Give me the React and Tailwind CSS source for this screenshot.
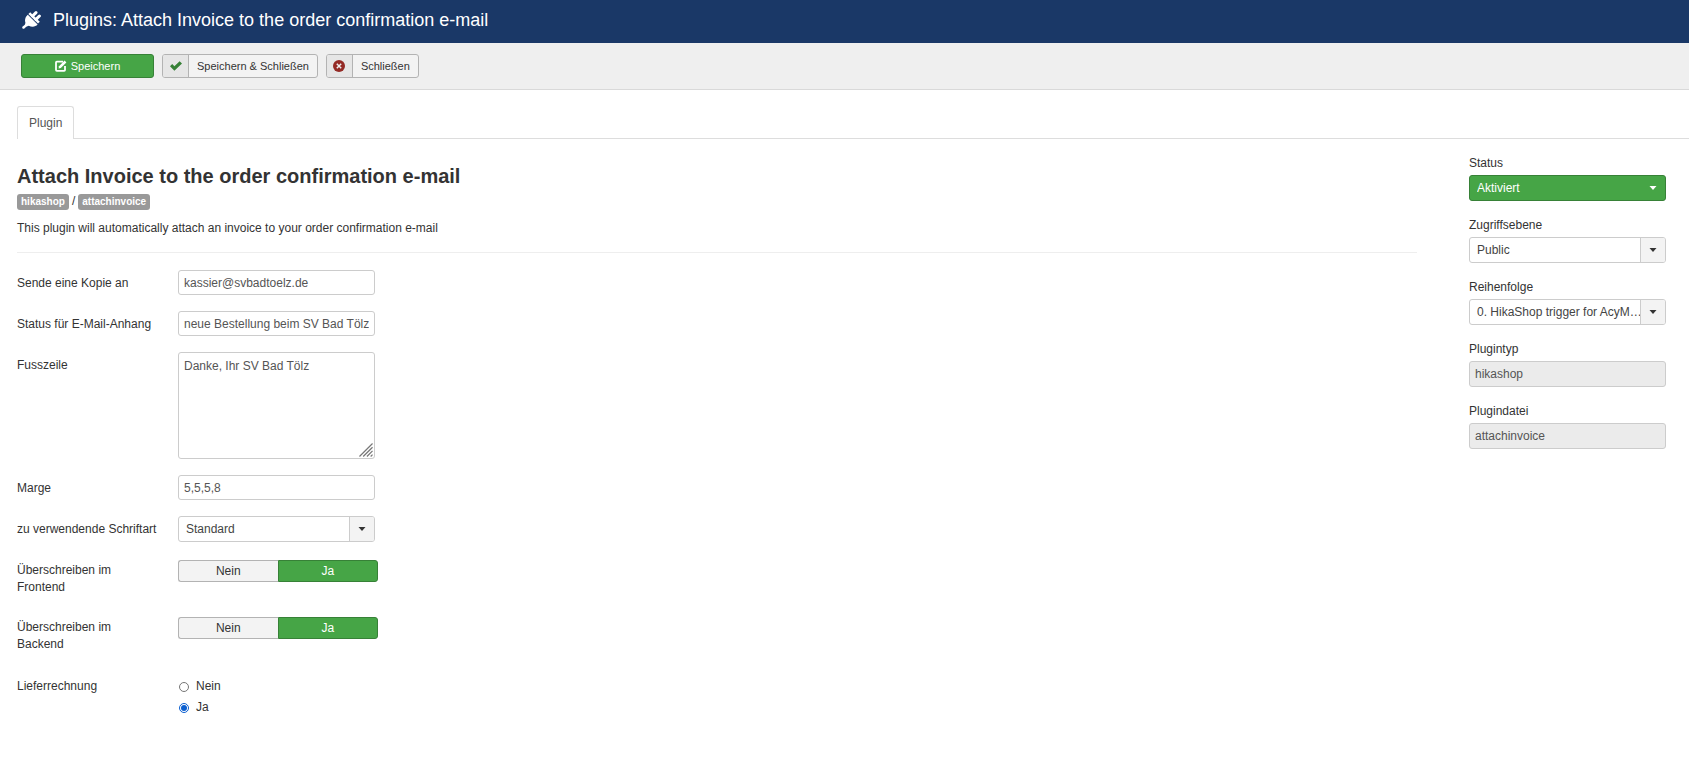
import React, { useState } from "react";

const PlugIcon = () => (
  <svg viewBox="0 0 19 18" className="w-[19px] h-[18px] fill-white" aria-hidden="true">
    <path d="M5.8 3.8 L15.6 13.6 C13.6 16 9.8 16.4 6.8 14.8 L5.4 15.2 Q4.2 15.6 3.4 16.6 L2.4 17.6 Q1.4 18.2 0.6 17.4 Q-0.2 16.6 0.6 15.6 L2 14.6 Q3 13.8 3.2 12.8 L3.4 11.6 C2.4 9 3.4 5.8 5.8 3.8 Z" />
    <path d="M6.4 3 L8.2 1.2 L17.8 10.8 L16 12.6 Z" />
    <path
      d="M10.6 5 L14 1.6 M14 8.4 L17.4 5"
      stroke="white"
      strokeWidth="3"
      strokeLinecap="round"
    />
  </svg>
);

const EditIcon = () => (
  <svg viewBox="0 0 12 12" className="size-3" aria-hidden="true">
    <path d="M8 1.7 H1.8 Q1 1.7 1 2.5 V10 Q1 10.8 1.8 10.8 H9.2 Q10 10.8 10 10 V6" fill="none" stroke="currentColor" strokeWidth="1.8" />
    <path d="M3.6 8.4 L4 6.2 L9.6 0.6 L11.4 2.4 L5.8 8 Z" fill="currentColor" />
  </svg>
);

const CheckIcon = () => (
  <svg viewBox="0 0 12 10" className="w-3 h-[10px] fill-[#378137]" aria-hidden="true">
    <path d="M0 5.2 L2.2 3 L4.4 5.2 L9.6 0.2 L12 2.4 L4.4 9.8 Z" />
  </svg>
);

const CancelIcon = () => (
  <svg viewBox="0 0 12 12" className="size-3" aria-hidden="true">
    <circle cx="6" cy="6" r="6" fill="#942a25" />
    <path d="M3.8 3.8 L8.2 8.2 M8.2 3.8 L3.8 8.2" stroke="#eee" strokeWidth="1.5" />
  </svg>
);

const inputClass =
  "block w-full h-[25px] px-[5px] border border-[#ccc] rounded-[3px] text-[#555] bg-white outline-none";

const ToolbarButton = ({ icon, children }) => (
  <button
    type="button"
    className="flex h-6 items-stretch rounded-[3px] border border-[#b3b3b3] bg-[#f3f3f3] text-[11px] text-[#333] overflow-hidden"
  >
    <span className="flex w-[26px] items-center justify-center border-r border-[#b3b3b3] bg-[#e6e6e6]">{icon}</span>
    <span className="flex items-center px-2">{children}</span>
  </button>
);

const Select = ({ id, options, green }) => (
  <div className="relative">
    <select
      id={id}
      className={
        green
          ? "block w-full h-[26px] appearance-none rounded-[3px] border border-[#378137] bg-[#46a546] pl-[7px] pr-[26px] text-white outline-none"
          : "block w-full h-[26px] appearance-none rounded-[3px] border border-[#ccc] bg-white pl-[7px] pr-[22px] text-[#444] text-ellipsis outline-none"
      }
    >
      {options.map((option) => (
        <option key={option}>{option}</option>
      ))}
    </select>
    <span
      className={
        green
          ? "pointer-events-none absolute inset-y-px right-px flex w-6 items-center justify-center text-white"
          : "pointer-events-none absolute inset-y-px right-px flex w-[25px] items-center justify-center rounded-r-[2px] border-l border-[#ccc] bg-[#f3f3f3] text-[#333]"
      }
    >
      <svg viewBox="0 0 8 4" className="w-2 h-1 fill-current" aria-hidden="true">
        <path d="M0.5 0 H7.5 L4 4 Z" />
      </svg>
    </span>
  </div>
);

const Row = ({ label, htmlFor, children }) => (
  <div className="flex items-start">
    <label htmlFor={htmlFor} className="w-[161px] shrink-0 pt-[5px] pr-4">
      {label}
    </label>
    {children}
  </div>
);

const YesNoSwitch = ({ label, name }) => {
  const [value, setValue] = useState("Ja");

  return (
    <div role="group" aria-labelledby={name} className="flex items-start">
      <div id={name} className="w-[161px] shrink-0 pt-[2px] pr-10">
        {label}
      </div>
      <div className="flex w-[200px] h-[22px]">
        <button
          type="button"
          aria-pressed={value === "Nein"}
          onClick={() => setValue("Nein")}
          className={
            value === "Nein"
              ? "flex-1 rounded-l-[3px] border border-[#942a25] bg-[#bd362f] text-white"
              : "flex-1 rounded-l-[3px] border border-r-0 border-[#b3b3b3] bg-[#f3f3f3] text-[#333]"
          }
        >
          Nein
        </button>
        <button
          type="button"
          aria-pressed={value === "Ja"}
          onClick={() => setValue("Ja")}
          className={
            value === "Ja"
              ? "flex-1 rounded-r-[3px] border border-[#378137] bg-[#46a546] text-white"
              : "flex-1 rounded-r-[3px] border border-l-0 border-[#b3b3b3] bg-[#f3f3f3] text-[#333]"
          }
        >
          Ja
        </button>
      </div>
    </div>
  );
};

const SideField = ({ label, htmlFor, children }) => (
  <div>
    <label htmlFor={htmlFor} className="block pb-[3px]">
      {label}
    </label>
    {children}
  </div>
);

const Badge = ({ children }) => (
  <span className="rounded-[3px] bg-[#999] px-1 text-[10px] leading-4 font-bold text-white">{children}</span>
);

const App = () => {
  return (
    <div className="min-h-screen bg-white font-['Liberation_Sans',Arial,sans-serif] text-[12px] leading-[17px] text-[#333]">
      {/* Title bar */}
      <header className="flex h-[43px] items-center gap-3 bg-[#1a3867] pb-1 pl-[22px] text-white">
        <PlugIcon />
        <h1 className="text-[18px] leading-6">Plugins: Attach Invoice to the order confirmation e-mail</h1>
      </header>

      {/* Toolbar */}
      <div className="flex gap-2 border-b border-[#d9d9d9] bg-[#efefef] py-[11px] pl-[21px]">
        <button
          type="button"
          className="flex h-6 w-[133px] items-center justify-center gap-1 rounded-[3px] border border-[#378137] bg-[#46a546] text-[11px] text-white"
        >
          <EditIcon />
          Speichern
        </button>
        <ToolbarButton icon={<CheckIcon />}>Speichern &amp; Schließen</ToolbarButton>
        <ToolbarButton icon={<CancelIcon />}>Schließen</ToolbarButton>
      </div>

      <div className="pt-4 pl-[17px]">
        {/* Tabs */}
        <nav className="flex border-b border-[#ddd]">
          <a
            href="#plugin"
            className="-mb-px rounded-t-[3px] border border-b-0 border-[#ddd] bg-white px-[11px] pt-2 pb-[7px] text-[#555]"
          >
            Plugin
          </a>
        </nav>

        <div className="flex gap-[52px] pr-[23px]">
          <main className="flex-1 pt-[23px]">
            <h2 className="text-[20px] leading-7 font-bold">Attach Invoice to the order confirmation e-mail</h2>
            <div className="flex items-center gap-[3px] pt-[3px]">
              <Badge>hikashop</Badge>/<Badge>attachinvoice</Badge>
            </div>
            <p className="pt-[10px]">This plugin will automatically attach an invoice to your order confirmation e-mail</p>
            <hr className="mt-[15px] border-[#eee]" />

            <form className="flex flex-col gap-4 pt-[17px]">
              <Row label="Sende eine Kopie an" htmlFor="copy">
                <div className="w-[197px]">
                  <input id="copy" type="text" className={inputClass} defaultValue="kassier@svbadtoelz.de" />
                </div>
              </Row>
              <Row label="Status für E-Mail-Anhang" htmlFor="status-mail">
                <div className="w-[197px]">
                  <input id="status-mail" type="text" className={inputClass} defaultValue="neue Bestellung beim SV Bad Tölz" />
                </div>
              </Row>
              <Row label="Fusszeile" htmlFor="footer">
                <div className="relative w-[197px]">
                  <textarea
                    id="footer"
                    className="block h-[107px] w-full resize-none rounded-[3px] border border-[#ccc] px-[5px] py-[5px] text-[#555] outline-none"
                    defaultValue="Danke, Ihr SV Bad Tölz"
                  />
                  <svg viewBox="0 0 15 15" className="pointer-events-none absolute right-[2px] bottom-[2px] size-[14px]" aria-hidden="true">
                    <path d="M0.5 14.5 L14.5 0.5 M4.5 14.5 L14.5 4.5 M8.5 14.5 L14.5 8.5 M12.5 14.5 L14.5 12.5" stroke="#777" strokeWidth="1.3" />
                  </svg>
                </div>
              </Row>
              <Row label="Marge" htmlFor="margin">
                <div className="w-[197px]">
                  <input id="margin" type="text" className={inputClass} defaultValue="5,5,5,8" />
                </div>
              </Row>
              <Row label="zu verwendende Schriftart" htmlFor="font">
                <div className="w-[197px]">
                  <Select id="font" options={["Standard"]} />
                </div>
              </Row>

              <div className="flex flex-col gap-[21px] pt-[2px]">
                <YesNoSwitch name="override-frontend" label="Überschreiben im Frontend" />
                <YesNoSwitch name="override-backend" label="Überschreiben im Backend" />
                <div role="radiogroup" aria-labelledby="delivery" className="flex items-start pt-1">
                  <div id="delivery" className="w-[161px] shrink-0">
                    Lieferrechnung
                  </div>
                  <div className="flex flex-col gap-1">
                    {["Nein", "Ja"].map((option) => (
                      <label key={option} className="flex items-center gap-[7px]">
                        <input
                          type="radio"
                          name="delivery"
                          value={option}
                          defaultChecked={option === "Ja"}
                          className="ml-px size-[10px] accent-[#0b5fd0]"
                        />
                        {option}
                      </label>
                    ))}
                  </div>
                </div>
              </div>
            </form>
          </main>

          {/* Sidebar */}
          <aside className="flex w-[197px] shrink-0 flex-col gap-4 pt-4">
            <SideField label="Status" htmlFor="status">
              <Select id="status" green options={["Aktiviert", "Deaktiviert"]} />
            </SideField>
            <SideField label="Zugriffsebene" htmlFor="access">
              <Select id="access" options={["Public"]} />
            </SideField>
            <SideField label="Reihenfolge" htmlFor="ordering">
              <Select id="ordering" options={["0. HikaShop trigger for AcyMailing"]} />
            </SideField>
            <SideField label="Plugintyp" htmlFor="folder">
              <input
                id="folder"
                type="text"
                readOnly
                className="block w-full h-[26px] rounded-[3px] border border-[#ccc] bg-[#ebebeb] px-[5px] text-[#555] outline-none"
                defaultValue="hikashop"
              />
            </SideField>
            <SideField label="Plugindatei" htmlFor="element">
              <input
                id="element"
                type="text"
                readOnly
                className="block w-full h-[26px] rounded-[3px] border border-[#ccc] bg-[#ebebeb] px-[5px] text-[#555] outline-none"
                defaultValue="attachinvoice"
              />
            </SideField>
          </aside>
        </div>
      </div>
    </div>
  );
};

export default App;
